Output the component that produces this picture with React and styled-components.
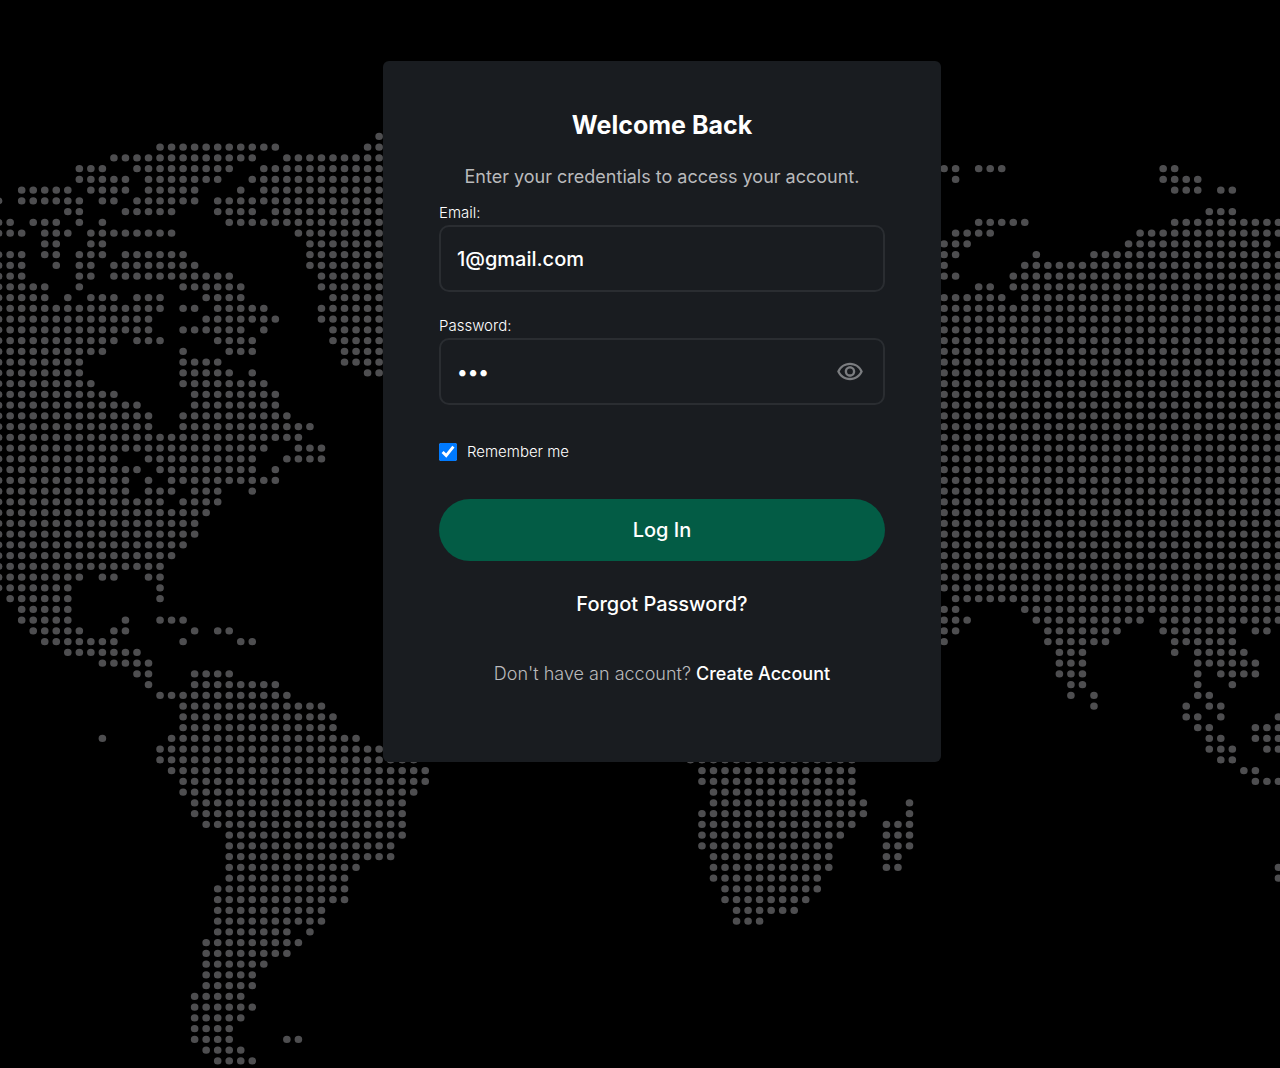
import React, { useState } from "react";
import styled, { createGlobalStyle } from "styled-components";
import { MdOutlineVisibility, MdOutlineVisibilityOff } from "react-icons/md";

const GlobalStyle = createGlobalStyle`
  *, *::before, *::after { box-sizing: border-box; }
  body {
    margin: 0;
    background: #000;
    color: #fff;
    font-family: Inter, "Liberation Sans", sans-serif;
  }
`;

/* Dotted world map: for each grid row, the runs of columns that hold land. */
const LAND = {
  0: "33",
  1: "14-24 32-33",
  2: "10-22 25-33",
  3: "7-9 12-20 23-33 82-83 85-87 101-102",
  4: "7-11 13-19 22-33 83 101-104",
  5: "2-6 8-11 13-17 21 23-33 102-104 106-107",
  6: "0 2-7 9-10 12-17 19-33",
  7: "6-7 11-15 19-22 24-33 105-107",
  8: "0-1 3-5 7 9 20-33 85-89 102-111",
  9: "0-2 4-6 8-15 26-33 83-86 99-111",
  10: "4-5 8-9 27-33 82-84 98-110",
  11: "0-2 4-5 7-9 11-16 27-33 82-83 90 95-111",
  12: "0-2 5 7-8 10-17 27-33 82 89-111",
  13: "0-2 7-8 10-20 28-33 82-83 88-111",
  14: "0-4 7 16-21 28-33 85-86 88-111",
  15: "0-4 6 8-10 12-14 18-21 29-33 82-87 89-111",
  16: "0-14 16-17 19-23 28-33 82-111",
  17: "0-13 18-24 28-33 82-111",
  18: "0-13 16-21 23 29-33 82-111",
  19: "0-10 12-14 19-22 29-33 82-111",
  20: "0-9 16 20-22 30-33 82-111",
  21: "0-7 16-19 30-33 82-111",
  22: "0-7 16-20 22 32-33 82-111",
  23: "0-8 16-23 82-111",
  24: "0-10 17-24 82-111",
  25: "0-12 17-24 82-111",
  26: "0-13 16-25 82-111",
  27: "0-13 16-27 82-111",
  28: "0-26 82-111",
  29: "0-23 26-28 82-111",
  30: "0-10 13-22 25-28 82-111",
  31: "0-12 14-22 24 82-111",
  32: "0-11 13 15-24 82-111",
  33: "0-11 13-15 17-19 22 82-111",
  34: "0-14 16-19 82-111",
  35: "0-18 82-111",
  36: "0-17 82-111",
  37: "0-17 82-111",
  38: "0-16 82-111",
  39: "0-15 82-111",
  40: "0-14 82-111",
  41: "0-7 9-10 13-14 82-111",
  42: "0-6 14 82-111",
  43: "1-6 14 83-111",
  44: "2-6 82-83 89-111",
  45: "2-6 11 14-16 82-84 90-99 101-111",
  46: "3-7 10-11 17 19-20 82-83 91-97 101-107 109-110",
  47: "4-10 16 21-22 82 91-96 102-107",
  48: "6-12 92-94 102 104-108",
  49: "9-13 92-94 104-109",
  50: "12-13 17-20 92-94 104 106-109",
  51: "13 17-24 93-94 104 107",
  52: "14-25 93 95 104-105",
  53: "16-28 95 103 105-106",
  54: "16-29 103-104 106 111",
  55: "16-29 104-105 109-111",
  56: "9 15-31 105-106 109-111",
  57: "14-33 105-107 110-111",
  58: "14-36 60-74 106-107",
  59: "15-37 61-74 108-109",
  60: "16-37 61-74 109-111",
  61: "16-36 62-74",
  62: "17-35 62-75 79",
  63: "17-35 61-75 79",
  64: "18-35 61-74 77-79",
  65: "20-35 61-73 77-79",
  66: "20-34 61-72 77-79",
  67: "20-34 62-72 77-78",
  68: "20-31 62-72 77-78 111",
  69: "20-30 62-71 111",
  70: "19-30 63-71",
  71: "19-30 63-70",
  72: "19-28 64-69",
  73: "19-28 64-66",
  74: "19-25 27",
  75: "18-26",
  76: "18-25",
  77: "18-23",
  78: "18-22",
  79: "18-22",
  80: "17-21",
  81: "17-22",
  82: "17-21",
  83: "17-20",
  84: "17-20 25-26",
  85: "18-21",
  86: "19-22",
};

const MAP_PATH = Object.entries(LAND)
  .flatMap(([row, runs]) =>
    runs.split(" ").map((run) => {
      const [from, to = from] = run.split("-");
      return `M${from} ${row}H${Number(to) + 0.2}`;
    })
  )
  .join("");

const Page = styled.div`
  display: grid;
  grid-template: minmax(100vh, auto) / minmax(0, 1fr);
`;

const MapBackdrop = styled.svg`
  grid-area: 1 / 1;
  width: 100%;
  height: 100%;
`;

const Main = styled.main`
  grid-area: 1 / 1;
  display: flex;
  justify-content: center;
  align-items: flex-start;
  padding: 61px 0 61px 44px;

  @media (max-width: 680px) {
    padding: 24px 16px;
  }
`;

const Card = styled.form`
  z-index: 1;
  display: flex;
  flex-direction: column;
  width: 100%;
  max-width: 558px;
  padding: 48px 56px 76px;
  border-radius: 6px;
  background: #191c20;
`;

const Title = styled.h1`
  margin: 0 0 24px;
  font-size: 25px;
  font-weight: 700;
  line-height: 32px;
  text-align: center;
`;

const Subtitle = styled.p`
  margin: 0 0 12px;
  color: #b9babc;
  font-size: 18px;
  font-weight: 400;
  line-height: 24px;
  text-align: center;
`;

const Field = styled.div`
  margin-bottom: ${(p) => (p.$last ? 35 : 22)}px;
`;

const Label = styled.label`
  display: block;
  font-size: 15px;
  font-weight: 300;
  line-height: 24px;
`;

const InputBox = styled.div`
  display: flex;
  align-items: center;
  height: 67px;
  padding: 0 19px 0 16px;
  border: 2px solid #2a2d31;
  border-radius: 10px;
`;

const Input = styled.input`
  flex: 1;
  min-width: 0;
  padding: 0;
  border: 0;
  outline: 0;
  background: transparent;
  color: #fff;
  font: 500 20px/24px Inter, "Liberation Sans", sans-serif;
`;

const IconButton = styled.button`
  display: flex;
  padding: 0;
  border: 0;
  background: none;
  color: #7b7d80;
  font-size: 28px;
  cursor: pointer;
`;

const Remember = styled.label`
  display: flex;
  align-items: center;
  gap: 10px;
  margin-bottom: 35px;
  font-size: 15px;
  font-weight: 300;
  line-height: 24px;
`;

const Checkbox = styled.input`
  width: 18px;
  height: 18px;
  margin: 0;
  accent-color: #007aff;
`;

const SubmitButton = styled.button`
  height: 62px;
  margin-bottom: 31px;
  border: 0;
  border-radius: 31px;
  background: #035c45;
  color: #fff;
  font: 500 20px/24px Inter, "Liberation Sans", sans-serif;
  cursor: pointer;
`;

const Link = styled.a`
  color: #fff;
  font-weight: 500;
  text-decoration: none;
`;

const ForgotLink = styled(Link)`
  align-self: center;
  margin-bottom: 46px;
  font-size: 20px;
  line-height: 24px;
`;

const SignUp = styled.p`
  margin: 0;
  color: #b9babc;
  font-size: 18px;
  font-weight: 300;
  line-height: 24px;
  text-align: center;
`;

export default function App() {
  const [email, setEmail] = useState("1@gmail.com");
  const [password, setPassword] = useState("123");
  const [visible, setVisible] = useState(false);

  return (
    <Page>
      <GlobalStyle />
      <MapBackdrop viewBox="0 0 1280 1068" preserveAspectRatio="xMinYMin slice" aria-hidden="true">
        <g transform="translate(-1.37 136.4) scale(11.53 10.75)">
          <path
            d={MAP_PATH}
            fill="none"
            stroke="#4e4e50"
            strokeWidth="0.66"
            strokeLinecap="round"
            strokeDasharray="0 1"
          />
        </g>
      </MapBackdrop>
      <Main>
        <Card onSubmit={(e) => e.preventDefault()}>
          <Title>Welcome Back</Title>
          <Subtitle>Enter your credentials to access your account.</Subtitle>
          <Field>
            <Label htmlFor="email">Email:</Label>
            <InputBox>
              <Input id="email" type="email" value={email} onChange={(e) => setEmail(e.target.value)} />
            </InputBox>
          </Field>
          <Field $last>
            <Label htmlFor="password">Password:</Label>
            <InputBox>
              <Input
                id="password"
                type={visible ? "text" : "password"}
                value={password}
                onChange={(e) => setPassword(e.target.value)}
              />
              <IconButton
                type="button"
                aria-label={visible ? "Hide password" : "Show password"}
                onClick={() => setVisible(!visible)}
              >
                {visible ? <MdOutlineVisibilityOff /> : <MdOutlineVisibility />}
              </IconButton>
            </InputBox>
          </Field>
          <Remember>
            <Checkbox type="checkbox" defaultChecked />
            Remember me
          </Remember>
          <SubmitButton type="submit">Log In</SubmitButton>
          <ForgotLink href="#forgot">Forgot Password?</ForgotLink>
          <SignUp>
            Don't have an account? <Link href="#signup">Create Account</Link>
          </SignUp>
        </Card>
      </Main>
    </Page>
  );
}
